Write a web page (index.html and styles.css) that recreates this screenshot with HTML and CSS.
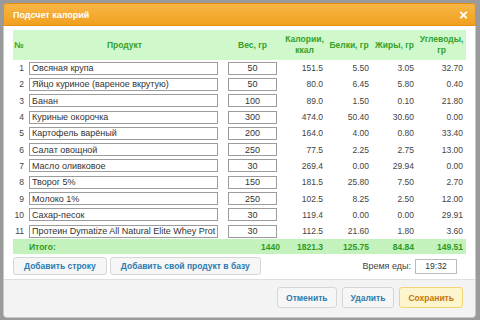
FILE: index.html
```html
<!DOCTYPE html>
<html lang="ru">
<head>
    <meta charset="UTF-8">
    <title>Подсчет калорий</title>
    <link rel="stylesheet" href="styles.css">
</head>
<body>
    <div class="dialog">
        <!-- Title -->
        <div class="titlebar">
            <span class="title">Подсчет калорий</span>
            <span class="close">&times;</span>
        </div>

        <!-- Content -->
        <div class="dialog-content">
            <table class="calc">
                <colgroup>
                    <col style="width:14px">
                    <col style="width:195px">
                    <col style="width:61px">
                    <col style="width:43px">
                    <col style="width:46px">
                    <col style="width:45px">
                    <col style="width:49px">
                </colgroup>
                <thead>
                    <tr>
                        <th class="num">№</th>
                        <th>Продукт</th>
                        <th>Вес, гр</th>
                        <th>Калории,<br>ккал</th>
                        <th>Белки, гр</th>
                        <th>Жиры, гр</th>
                        <th>Углеводы,<br>гр</th>
                    </tr>
                </thead>
                <tbody>
                    <tr><td class="num">1</td><td><input class="product" value="Овсяная крупа"></td><td><input class="weight" value="50"></td><td>151.5</td><td>5.50</td><td>3.05</td><td>32.70</td></tr>
                    <tr><td class="num">2</td><td><input class="product" value="Яйцо куриное (вареное вкрутую)"></td><td><input class="weight" value="50"></td><td>80.0</td><td>6.45</td><td>5.80</td><td>0.40</td></tr>
                    <tr><td class="num">3</td><td><input class="product" value="Банан"></td><td><input class="weight" value="100"></td><td>89.0</td><td>1.50</td><td>0.10</td><td>21.80</td></tr>
                    <tr><td class="num">4</td><td><input class="product" value="Куриные окорочка"></td><td><input class="weight" value="300"></td><td>474.0</td><td>50.40</td><td>30.60</td><td>0.00</td></tr>
                    <tr><td class="num">5</td><td><input class="product" value="Картофель варёный"></td><td><input class="weight" value="200"></td><td>164.0</td><td>4.00</td><td>0.80</td><td>33.40</td></tr>
                    <tr><td class="num">6</td><td><input class="product" value="Салат овощной"></td><td><input class="weight" value="250"></td><td>77.5</td><td>2.25</td><td>2.75</td><td>13.00</td></tr>
                    <tr><td class="num">7</td><td><input class="product" value="Масло оливковое"></td><td><input class="weight" value="30"></td><td>269.4</td><td>0.00</td><td>29.94</td><td>0.00</td></tr>
                    <tr><td class="num">8</td><td><input class="product" value="Творог 5%"></td><td><input class="weight" value="150"></td><td>181.5</td><td>25.80</td><td>7.50</td><td>2.70</td></tr>
                    <tr><td class="num">9</td><td><input class="product" value="Молоко 1%"></td><td><input class="weight" value="250"></td><td>102.5</td><td>8.25</td><td>2.50</td><td>12.00</td></tr>
                    <tr><td class="num">10</td><td><input class="product" value="Сахар-песок"></td><td><input class="weight" value="30"></td><td>119.4</td><td>0.00</td><td>0.00</td><td>29.91</td></tr>
                    <tr><td class="num">11</td><td><input class="product" value="Протеин Dymatize All Natural Elite Whey Protein"></td><td><input class="weight" value="30"></td><td>112.5</td><td>21.60</td><td>1.80</td><td>3.60</td></tr>
                </tbody>
                <tfoot>
                    <tr>
                        <td></td>
                        <td class="total-label">Итого:</td>
                        <td>1440</td>
                        <td>1821.3</td>
                        <td>125.75</td>
                        <td>84.84</td>
                        <td>149.51</td>
                    </tr>
                </tfoot>
            </table>

            <div class="tools">
                <button class="btn">Добавить строку</button>
                <button class="btn">Добавить свой продукт в базу</button>
                <div class="meal-time">
                    <label>Время еды:</label>
                    <input class="time" value="19:32">
                </div>
            </div>
        </div>

        <!-- Buttons -->
        <div class="buttonpane">
            <button class="btn btn-big">Отменить</button>
            <button class="btn btn-big">Удалить</button>
            <button class="btn btn-big btn-save">Сохранить</button>
        </div>
    </div>
</body>
</html>
```

FILE: styles.css
```css
* {
    margin: 0;
    padding: 0;
    box-sizing: border-box;
}

body {
    font-family: "Liberation Sans", Arial, sans-serif;
    font-size: 9px;
    background: #9a9a9a;
    color: #333;
    padding: 3px 4px 2px 3px;
    height: 320px;
    overflow: hidden;
}

.dialog {
    background: #fff;
    border: 1px solid #c8c8c8;
    border-radius: 4px;
    height: 315px;
    display: flex;
    flex-direction: column;
}

/* Title */
.titlebar {
    background: linear-gradient(#f8b645, #f0a020);
    border: 1px solid #e78f08;
    border-radius: 4px 4px 0 0;
    margin: -1px -1px 0;
    height: 23px;
    display: flex;
    justify-content: space-between;
    align-items: center;
    padding: 0 7px 0 9px;
    color: white;
    font-weight: bold;
}

.title {
    font-size: 9px;
}

.close {
    font-size: 15px;
    line-height: 1;
}

/* Content */
.dialog-content {
    flex: 1;
    padding: 4px 9px 0 9px;
}

.calc {
    width: 453px;
    border-collapse: collapse;
    table-layout: fixed;
}

.calc th {
    background: #cff8cb;
    color: #35a02a;
    font-weight: bold;
    font-size: 8.5px;
    height: 30px;
    text-align: center;
    line-height: 11px;
}

.calc th.num {
    text-align: left;
    padding-left: 1px;
}

.calc td {
    height: 16.3px;
    text-align: right;
    padding: 0 3px 0 0;
    font-size: 8.5px;
    color: #444;
    white-space: nowrap;
}

.calc td.num {
    padding-right: 3px;
}

.calc input {
    font-family: "Liberation Sans", Arial, sans-serif;
    font-size: 9px;
    color: #333;
    border: 1px solid #9c9c9c;
    height: 13px;
    padding: 0 2px;
    display: block;
    background: #fff;
}

.product {
    width: 189px;
    margin-left: 2px;
}

.weight {
    width: 49px;
    margin-left: 6px;
    text-align: center;
}

.calc tfoot td {
    background: #c4f2bc;
    color: #2f9a1e;
    font-weight: bold;
    height: 15px;
}

.calc td.total-label {
    text-align: left;
    padding-left: 2px;
}

/* Buttons */
.tools {
    display: flex;
    align-items: center;
    gap: 3px;
    margin-top: 3px;
}

.btn {
    font-family: "Liberation Sans", Arial, sans-serif;
    font-size: 8.5px;
    font-weight: bold;
    background: #f6f6f6;
    border: 1px solid #d6d6d6;
    border-radius: 3px;
    color: #2d7bb0;
    height: 18px;
    padding: 0 10px;
}

.meal-time {
    margin-left: auto;
    margin-right: 9px;
    display: flex;
    align-items: center;
    gap: 4px;
    color: #444;
}

.time {
    font-family: "Liberation Sans", Arial, sans-serif;
    font-size: 8.5px;
    width: 42px;
    height: 15px;
    border: 1px solid #bbb;
    text-align: center;
    color: #333;
}

.buttonpane {
    height: 38px;
    border-top: 1px solid #dedede;
    background: #f3f3f3;
    border-radius: 0 0 4px 4px;
    display: flex;
    justify-content: flex-end;
    align-items: center;
    gap: 5px;
    padding: 0 12px 2px 0;
}

.btn-big {
    height: 21px;
    padding: 0 8px;
}

.btn-save {
    background: #fdf5ce;
    border-color: #f5d472;
    color: #c77405;
}
```
